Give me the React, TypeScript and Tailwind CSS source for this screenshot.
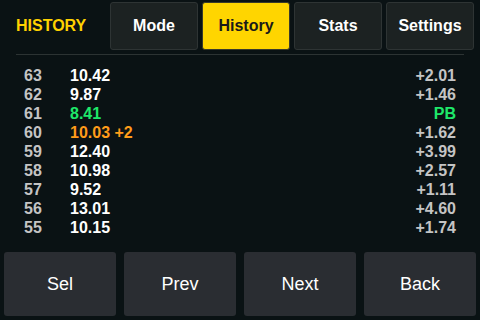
import React from 'react'

type Row = { n: number; time: string; delta: string; kind?: 'pb' | 'dnf' }

const rows: Row[] = [
    { n: 63, time: '10.42', delta: '+2.01' },
    { n: 62, time: '9.87', delta: '+1.46' },
    { n: 61, time: '8.41', delta: 'PB', kind: 'pb' },
    { n: 60, time: '10.03 +2', delta: '+1.62', kind: 'dnf' },
    { n: 59, time: '12.40', delta: '+3.99' },
    { n: 58, time: '10.98', delta: '+2.57' },
    { n: 57, time: '9.52', delta: '+1.11' },
    { n: 56, time: '13.01', delta: '+4.60' },
    { n: 55, time: '10.15', delta: '+1.74' },
]

const tabs = ['Mode', 'History', 'Stats', 'Settings']

export default function App() {
    return (
        <div className="w-[480px] h-[320px] bg-[#0a1214] flex flex-col overflow-hidden" style={{ fontFamily: '"Liberation Sans", Arial, sans-serif' }}>
            <div className="flex items-center pt-[2px] h-[50px]">
                <div className="w-[110px] pl-4 text-[16px] font-bold text-[#ffd200]">HISTORY</div>
                <div className="flex gap-[4px]">
                    {tabs.map(t => (
                        <div
                            key={t}
                            className={t === 'History'
                                ? "w-[88px] h-[48px] flex items-center justify-center rounded-[3px] border border-[#3a3a2a] bg-[#ffd500] text-[#1a1a1a] text-[16px] font-bold"
                                : "w-[88px] h-[48px] flex items-center justify-center rounded-[3px] border border-[#2e3434] bg-[#1c2222] text-white text-[16px] font-bold"}
                        >
                            {t}
                        </div>
                    ))}
                </div>
            </div>
            <div className="mx-4 mt-[4px] h-px bg-[#2c3333]"></div>

            <div className="flex flex-col px-6 pt-[11px] text-[16px] font-bold leading-[19px]">
                {rows.map(r => (
                    <div key={r.n} className="flex h-[19px] items-center">
                        <span className="w-[46px] text-[#c4c4c4]">{r.n}</span>
                        <span className={r.kind === 'pb' ? "text-[#1ee86a]" : r.kind === 'dnf' ? "text-[#ff9c1a]" : "text-white"}>{r.time}</span>
                        <span className={r.kind === 'pb' ? "ml-auto text-[#1ee86a]" : "ml-auto text-[#c4c4c4]"}>{r.delta}</span>
                    </div>
                ))}
            </div>

            <div className="mt-auto flex gap-2 px-1 pb-1">
                {['Sel', 'Prev', 'Next', 'Back'].map(b => (
                    <div key={b} className="w-[112px] h-[64px] flex items-center justify-center rounded-[3px] bg-[#2a2d32] text-white text-[18px]">
                        {b}
                    </div>
                ))}
            </div>
        </div>
    )
}
